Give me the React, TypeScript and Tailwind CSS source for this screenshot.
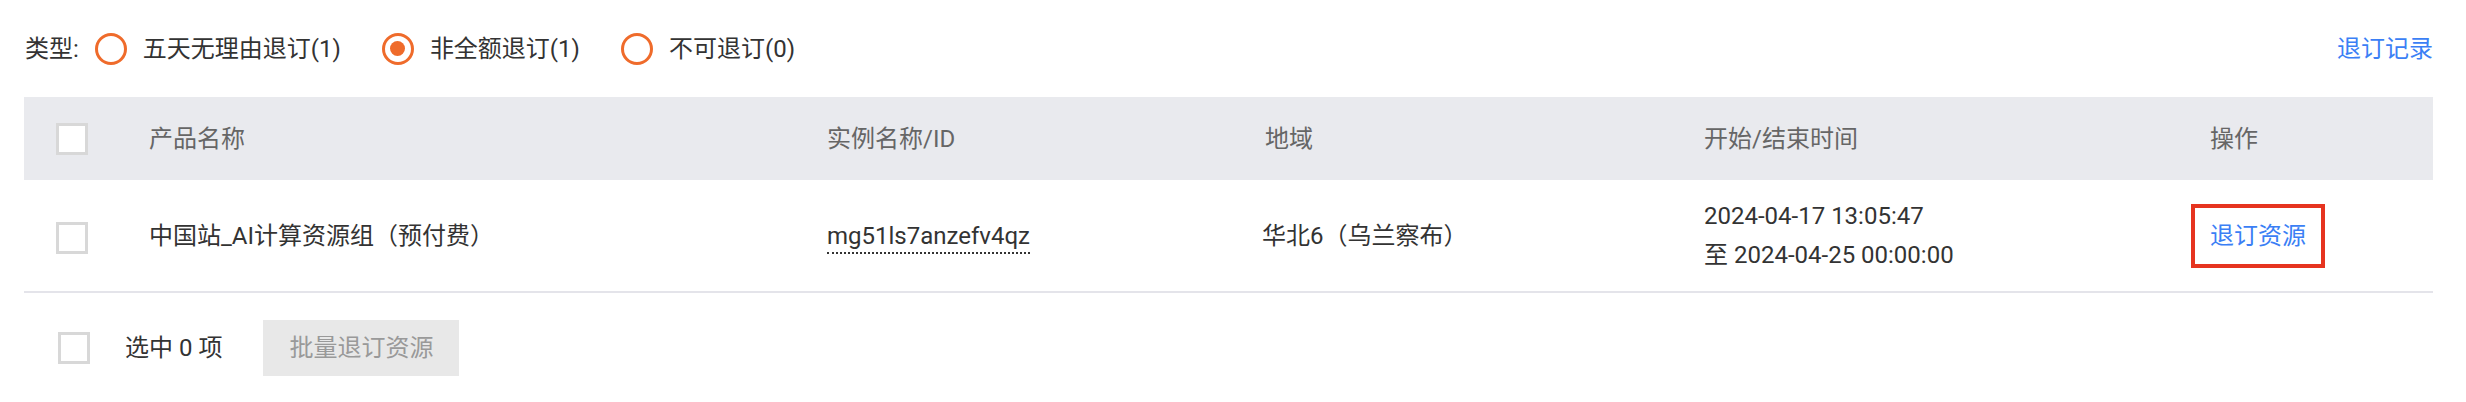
import React from "react";

const radios = [
  { label: "五天无理由退订(1)", checked: false },
  { label: "非全额退订(1)", checked: true },
  { label: "不可退订(0)", checked: false },
];

function Radio({ checked }: { checked: boolean }) {
  return (
    <span className="flex h-[32px] w-[32px] shrink-0 items-center justify-center rounded-full border-[3px] border-[#ef6b2b] bg-white">
      {checked && <span className="h-[15px] w-[15px] rounded-full bg-[#ef6b2b]" />}
    </span>
  );
}

function Checkbox() {
  return <span className="block h-[32px] w-[32px] shrink-0 border-[3px] border-[#d8d8d8] bg-white" />;
}

const cols = "grid grid-cols-[125px_678px_438px_439px_506px_1fr] items-center";

export default function App() {
  return (
    <div className="h-[402px] w-[2466px] bg-white font-[Roboto,'Noto_Sans_CJK_SC',sans-serif] text-[24px] text-[#333]">
      <div className="ml-[24px] w-[2409px]">
        {/* type filter */}
        <div className="flex h-[97px] items-center justify-between">
          <div className="flex items-center">
            <span className="mr-[16px] pl-[1px]">类型:</span>
            {radios.map((r, i) => (
              <label key={r.label} className={`flex items-center ${i > 0 ? "ml-[41px]" : ""}`}>
                <Radio checked={r.checked} />
                <span className="ml-[16px]">{r.label}</span>
              </label>
            ))}
          </div>
          <a className="text-[#3b7ff5]">退订记录</a>
        </div>

        {/* header */}
        <div className={`${cols} h-[83px] bg-[#e9eaee] text-[#666]`}>
          <div className="pl-[32px]">
            <Checkbox />
          </div>
          <div>产品名称</div>
          <div>实例名称/ID</div>
          <div>地域</div>
          <div>开始/结束时间</div>
          <div>操作</div>
        </div>

        {/* row */}
        <div className={`${cols} h-[113px] border-b-2 border-[#e4e4ea]`}>
          <div className="pl-[32px] pt-[4px]">
            <Checkbox />
          </div>
          <div>中国站_AI计算资源组（预付费）</div>
          <div>
            <span className="border-b-2 border-dotted border-[#333] pb-[2px]">mg51ls7anzefv4qz</span>
          </div>
          <div className="-ml-[3px]">华北6（乌兰察布）</div>
          <div className="leading-[39px]">
            <div>2024-04-17 13:05:47</div>
            <div>至 2024-04-25 00:00:00</div>
          </div>
          <div>
            <span className="-ml-[19px] inline-block border-4 border-[#e6341f] px-[15px] leading-[56px] text-[#3b7ff5]">
              退订资源
            </span>
          </div>
        </div>

        {/* footer */}
        <div className="flex h-[109px] items-center pl-[34px]">
          <Checkbox />
          <span className="ml-[35px]">选中 0 项</span>
          <button className="ml-[41px] h-[56px] w-[196px] bg-[#e8e8e8] text-[#999]">批量退订资源</button>
        </div>
      </div>
    </div>
  );
}
